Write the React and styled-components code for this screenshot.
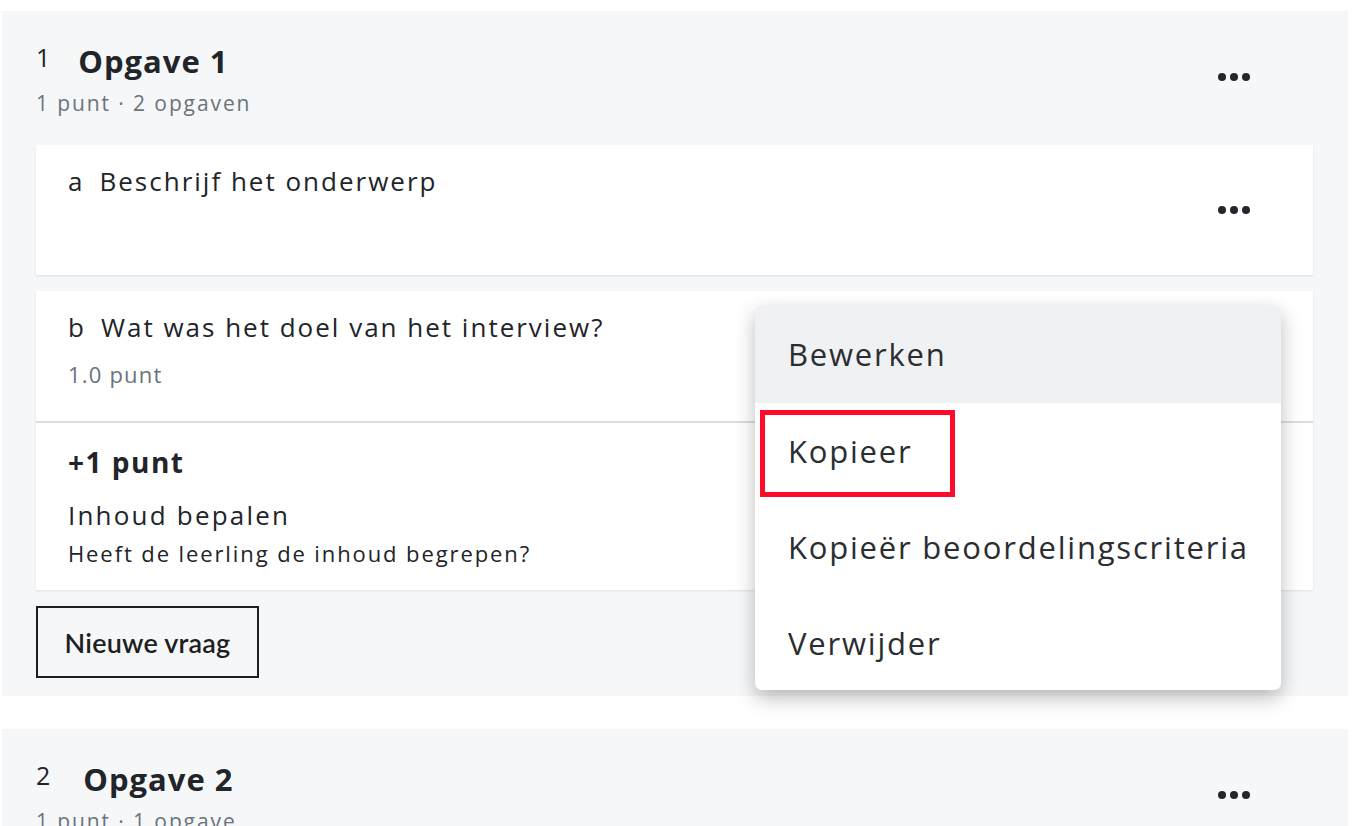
import React from "react";
import styled, { createGlobalStyle } from "styled-components";

const Global = createGlobalStyle`
  html, body { margin: 0; padding: 0; background: #ffffff; }
  body { font-family: "Open Sans", "Liberation Sans", sans-serif; color: #212429; overflow: hidden; }
  * { box-sizing: border-box; }
`;

const Page = styled.div`
  width: 1362px;
  height: 826px;
  padding: 11px 14px 0 2px;
  display: flex;
  flex-direction: column;
  gap: 33px;
  overflow: hidden;
`;

const Section = styled.section`
  background: #f6f7f9;
  padding: 32px 35px 18px 34px;
  display: flex;
  flex-direction: column;
  gap: 16px;
  flex-shrink: 0;
`;

const SectionHeader = styled.div`
  display: flex;
  align-items: flex-start;
  justify-content: space-between;
  padding-right: 47px;
  margin-bottom: 13px;
`;

const HeaderText = styled.div`
  display: flex;
  flex-direction: column;
  gap: 11px;
`;

const TitleRow = styled.div`
  display: flex;
  align-items: flex-start;
  gap: ${(p) => p.$gap}px;
`;

const Num = styled.span`
  font-size: 25px;
  line-height: 26px;
  margin-top: 1px;
  font-weight: 400;
`;

const Title = styled.h2`
  margin: 0;
  font-size: 31px;
  line-height: 36px;
  font-weight: 700;
  letter-spacing: 1px;
`;

const Meta = styled.div`
  font-size: 21px;
  line-height: 26px;
  letter-spacing: 1.9px;
  color: #6b737c;
`;

const MoreButton = styled.button`
  width: 64px;
  height: 40px;
  margin-top: ${(p) => p.$top || 0}px;
  border: 0;
  background: transparent;
  padding: 0;
  display: flex;
  align-items: center;
  justify-content: center;
  cursor: pointer;
`;

const Card = styled.div`
  background: #ffffff;
  box-shadow: 0 1px 2px rgba(0, 0, 0, 0.1);
  position: relative;
  display: flex;
  flex-direction: column;
`;

const CardRow = styled.div`
  display: flex;
  justify-content: space-between;
  align-items: center;
  min-height: ${(p) => p.$min}px;
  padding: 0 47px 0 32px;
  border-bottom: ${(p) => (p.$divider ? "2px solid #d9dce0" : "0")};
`;

const QuestionBlock = styled.div`
  align-self: flex-start;
  padding-top: 20px;
  display: flex;
  flex-direction: column;
  gap: 18px;
`;

const Question = styled.div`
  font-size: 26px;
  line-height: 32px;
  letter-spacing: 2px;
  display: flex;
  gap: 15px;
`;

const Points = styled.div`
  font-size: 22px;
  line-height: 26px;
  letter-spacing: 1.2px;
  color: #6b737c;
`;

const CriteriaBlock = styled.div`
  padding: 22px 32px 24px 32px;
  display: flex;
  flex-direction: column;
`;

const CriteriaPoints = styled.div`
  font-size: 28px;
  font-weight: 700;
  line-height: 34px;
  letter-spacing: 1.5px;
  margin-bottom: 20px;
`;

const CriteriaTitle = styled.div`
  font-size: 26px;
  line-height: 32px;
  letter-spacing: 2.2px;
  margin-bottom: 9px;
`;

const CriteriaDesc = styled.div`
  font-size: 22px;
  line-height: 26px;
  letter-spacing: 1.9px;
`;

const NewButton = styled.button`
  align-self: flex-start;
  width: 223px;
  height: 72px;
  border: 2px solid #1d1f22;
  background: transparent;
  font-family: Lato, "Open Sans", sans-serif;
  font-size: 27px;
  font-weight: 600;
  letter-spacing: 0.2px;
  color: #1d1f22;
  padding: 0;
  cursor: pointer;
`;

const Menu = styled.div`
  position: absolute;
  top: 14px;
  right: 32px;
  width: 526px;
  background: #ffffff;
  border-radius: 7px;
  box-shadow: 0 8px 20px rgba(0, 0, 0, 0.26);
  display: flex;
  flex-direction: column;
  z-index: 5;
`;

const MenuItem = styled.div`
  position: relative;
  height: ${(p) => p.$h}px;
  display: flex;
  align-items: center;
  padding-left: 33px;
  font-size: 31px;
  letter-spacing: 1.8px;
  color: #2a2d31;
  background: ${(p) => (p.$active ? "#f0f1f3" : "transparent")};
  border-radius: ${(p) => (p.$first ? "7px 7px 0 0" : p.$last ? "0 0 7px 7px" : "0")};
`;

const Highlight = styled.span`
  position: absolute;
  left: 5px;
  top: 7px;
  width: 195px;
  height: 87px;
  border: 5px solid #ff0a2b;
  pointer-events: none;
`;

const Dots = () => (
  <svg width="34" height="10" viewBox="0 0 34 10" aria-hidden="true">
    <circle cx="5" cy="5" r="4" fill="#24262b" />
    <circle cx="17" cy="5" r="4" fill="#24262b" />
    <circle cx="29" cy="5" r="4" fill="#24262b" />
  </svg>
);

const SectionHead = ({ num, title, meta, gap }) => (
  <SectionHeader>
    <HeaderText>
      <TitleRow $gap={gap}>
        <Num>{num}</Num>
        <Title>{title}</Title>
      </TitleRow>
      <Meta>{meta}</Meta>
    </HeaderText>
    <MoreButton aria-label="Meer" $top={14}>
      <Dots />
    </MoreButton>
  </SectionHeader>
);

export default function App() {
  const items = ["Bewerken", "Kopieer", "Kopieër beoordelingscriteria", "Verwijder"];
  return (
    <>
      <Global />
      <Page>
        <Section>
          <SectionHead num="1" title="Opgave 1" meta="1 punt · 2 opgaven" gap={28} />
          <Card>
            <CardRow $min={130}>
              <QuestionBlock>
                <Question>
                  <span>a</span>
                  <span>Beschrijf het onderwerp</span>
                </Question>
              </QuestionBlock>
              <MoreButton aria-label="Meer">
                <Dots />
              </MoreButton>
            </CardRow>
          </Card>
          <Card>
            <CardRow $min={132} $divider>
              <QuestionBlock>
                <Question>
                  <span>b</span>
                  <span>Wat was het doel van het interview?</span>
                </Question>
                <Points>1.0 punt</Points>
              </QuestionBlock>
            </CardRow>
            <CriteriaBlock>
              <CriteriaPoints>+1 punt</CriteriaPoints>
              <CriteriaTitle>Inhoud bepalen</CriteriaTitle>
              <CriteriaDesc>Heeft de leerling de inhoud begrepen?</CriteriaDesc>
            </CriteriaBlock>
            <Menu>
              {items.map((it, i) => (
                <MenuItem
                  key={it}
                  $h={i === 0 ? 98 : i === 3 ? 95 : 96}
                  $active={i === 0}
                  $first={i === 0}
                  $last={i === 3}
                >
                  {i === 1 && <Highlight />}
                  {it}
                </MenuItem>
              ))}
            </Menu>
          </Card>
          <NewButton>Nieuwe vraag</NewButton>
        </Section>
        <Section>
          <SectionHead num="2" title="Opgave 2" meta="1 punt · 1 opgave" gap={33} />
        </Section>
      </Page>
    </>
  );
}
